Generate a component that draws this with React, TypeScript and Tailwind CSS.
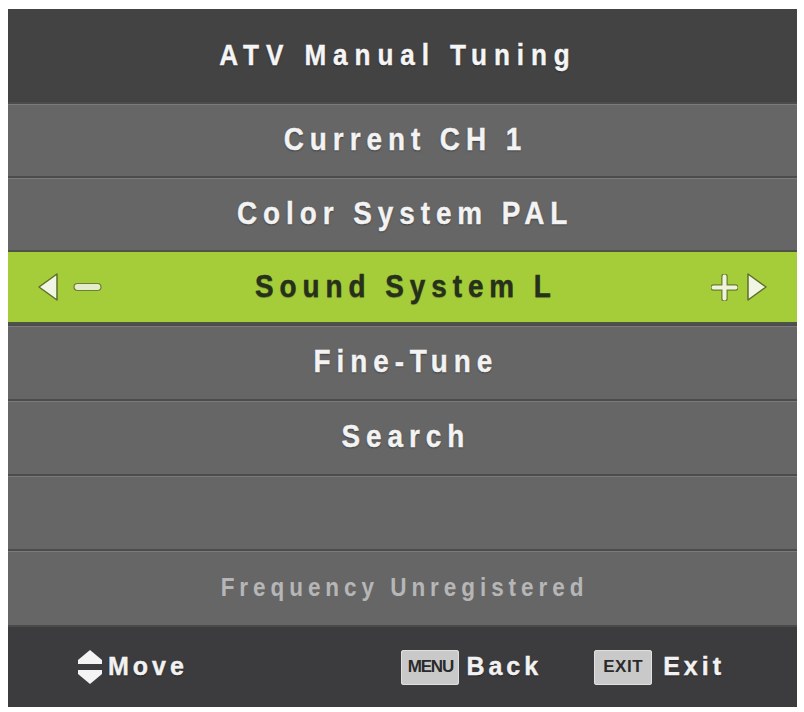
import type { ReactNode } from 'react'

const FONT = { fontFamily: '"Liberation Sans", Arial, sans-serif' }

const shadow = '[text-shadow:0_1px_2px_rgba(0,0,0,0.45)]'
const heavy = '[-webkit-text-stroke:0.4px_currentColor]'

// OSD font is a slightly narrow bold face: squeeze Liberation Sans a little.
const rowText = `text-[31px] font-bold tracking-[6.6px] pl-[6.6px] scale-x-[0.9] text-[#f3f3f3] ${shadow} ${heavy}`

function MenuRow({ children, height }: { children: ReactNode; height: string }) {
  return (
    <div
      className={`flex items-center justify-center bg-[#666667] border-t-2 border-[#4c4c4d] shadow-[inset_0_1px_0_#7b7b7c] ${height}`}
    >
      {children}
    </div>
  )
}

function ArrowLeft() {
  return (
    <svg width="22" height="30" viewBox="0 0 22 30" aria-hidden="true">
      <polygon
        points="20,2 20,28 2,15"
        fill="#f1f6e4"
        stroke="#5d6e2c"
        strokeWidth="1.5"
        strokeLinejoin="round"
      />
    </svg>
  )
}

function ArrowRight() {
  return (
    <svg width="22" height="30" viewBox="0 0 22 30" aria-hidden="true">
      <polygon
        points="2,2 2,28 20,15"
        fill="#f1f6e4"
        stroke="#5d6e2c"
        strokeWidth="1.5"
        strokeLinejoin="round"
      />
    </svg>
  )
}

function Minus() {
  return (
    <svg width="29" height="10" viewBox="0 0 29 10" aria-hidden="true">
      <rect x="1" y="1.5" width="27" height="7" rx="3.5" fill="#e4eccc" stroke="#6c7f33" strokeWidth="1.2" />
    </svg>
  )
}

function Plus() {
  return (
    <svg width="27" height="27" viewBox="0 0 27 27" aria-hidden="true">
      <path d="M13.5 2.5v22M2.5 13.5h22" stroke="#6c7f33" strokeWidth="6.5" strokeLinecap="round" />
      <path d="M13.5 2.5v22M2.5 13.5h22" stroke="#eef4dc" strokeWidth="4" strokeLinecap="round" />
    </svg>
  )
}

function UpDown() {
  return (
    <svg width="26" height="35" viewBox="0 0 26 35" aria-hidden="true">
      <polygon points="13,0 25,10 25,14 1,14 1,10" fill="#f4f4f4" />
      <polygon points="1,20 25,20 25,24 13,34 1,24" fill="#f4f4f4" />
    </svg>
  )
}

function KeyCap({ label, className }: { label: string; className: string }) {
  return (
    <span
      className={`flex h-[35px] w-[58px] items-center justify-center rounded-[3px] bg-[#c9c9c9] font-bold text-[#2a2a2a] shadow-[inset_0_0_0_1px_#e0e0e0] ${className}`}
    >
      {label}
    </span>
  )
}

export default function App() {
  return (
    <div className="min-h-screen bg-white pl-[8px] pt-[9px]" style={FONT}>
      <div className="w-[789px] overflow-hidden">
        <div className="flex h-[93px] items-center justify-center bg-[#434344] pr-[16px]">
          <span className={`text-[29px] font-bold tracking-[7.7px] pl-[7.7px] scale-x-[0.9] text-[#f5f5f5] ${shadow} ${heavy}`}>
            ATV Manual Tuning
          </span>
        </div>

        <MenuRow height="h-[74px]">
          <span className={rowText}>Current CH 1</span>
        </MenuRow>
        <MenuRow height="h-[74px]">
          <span className={rowText}>Color System PAL</span>
        </MenuRow>

        <div className="grid h-[74px] grid-cols-[1fr_auto_1fr] items-center border-y-2 border-[#4f5249] bg-[#a5cd3a] px-[29px]">
          <div className="flex items-center gap-[14px]">
            <ArrowLeft />
            <Minus />
          </div>
          <span className={`pl-[6.6px] text-[31px] font-bold tracking-[6.6px] scale-x-[0.9] text-[#26301a] [text-shadow:0_1px_1px_rgba(0,0,0,0.25)] ${heavy}`}>
            Sound System L
          </span>
          <div className="flex items-center justify-end gap-[8px]">
            <Plus />
            <ArrowRight />
          </div>
        </div>

        <MenuRow height="h-[75px]">
          <span className={rowText}>Fine-Tune</span>
        </MenuRow>
        <MenuRow height="h-[75px]">
          <span className={rowText}>Search</span>
        </MenuRow>
        <MenuRow height="h-[75px]">
          <span />
        </MenuRow>
        <MenuRow height="h-[76px]">
          <span className="pl-[5.5px] text-[25px] font-bold tracking-[5.5px] scale-x-[0.9] text-[#b6b6b7]">
            Frequency Unregistered
          </span>
        </MenuRow>

        <div className="flex h-[82px] items-center border-t-2 border-[#4a4a4b] bg-[#3c3c3e] pl-[69px] pr-[72px] text-[25px] font-bold tracking-[4px] text-[#f2f2f2]">
          <div className="flex items-center gap-[5px]">
            <UpDown />
            <span className={`${shadow} ${heavy}`}>Move</span>
          </div>
          <div className="ml-auto flex items-center gap-[7px]">
            <KeyCap label="MENU" className="text-[17px] tracking-[-1.2px]" />
            <span className={`${shadow} ${heavy}`}>Back</span>
          </div>
          <div className="ml-[52px] flex items-center gap-[11px]">
            <KeyCap label="EXIT" className="text-[17px] tracking-[0.5px]" />
            <span className={`${shadow} ${heavy}`}>Exit</span>
          </div>
        </div>
      </div>
    </div>
  )
}
